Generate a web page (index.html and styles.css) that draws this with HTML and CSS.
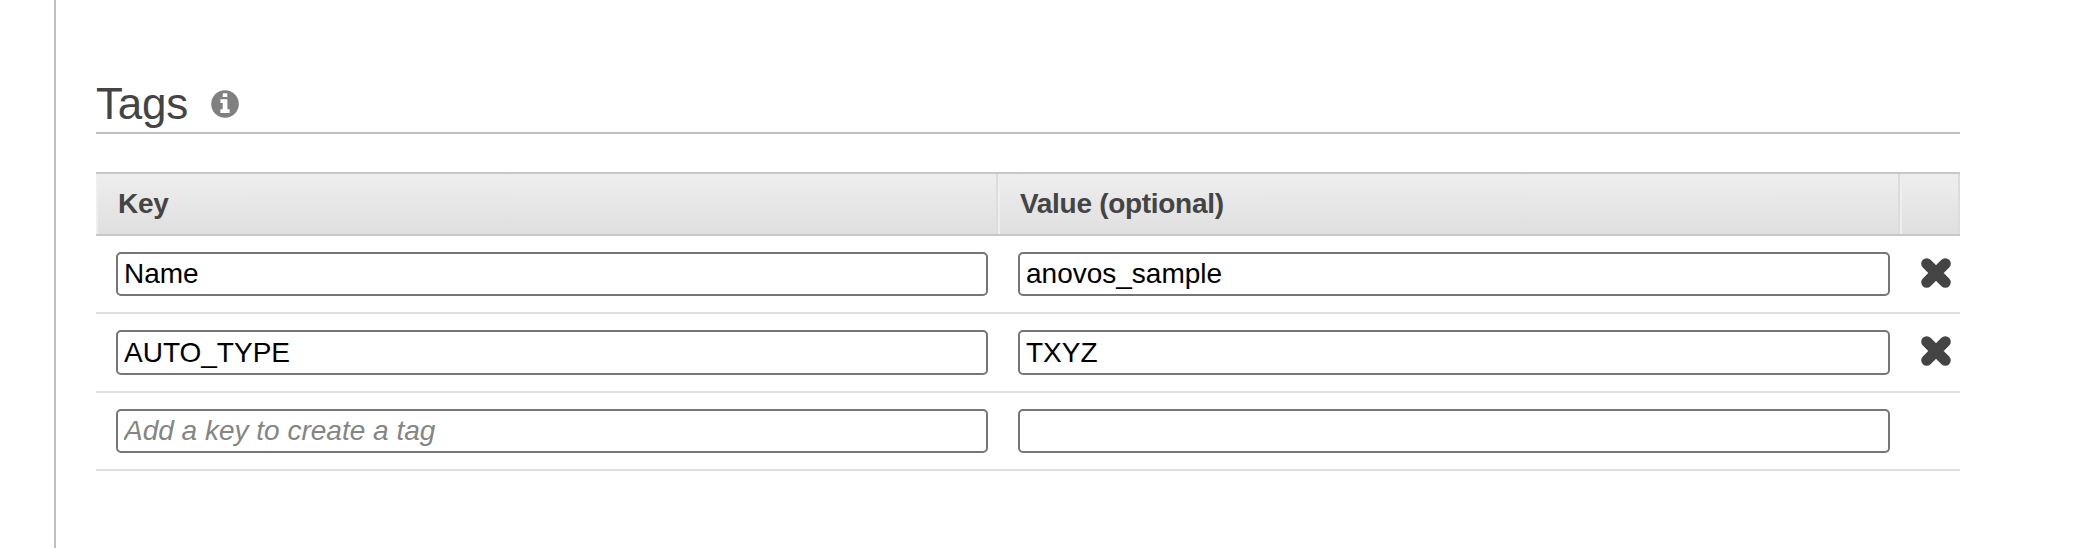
FILE: index.html
```html
<!DOCTYPE html>
<html lang="en">
<head>
<meta charset="utf-8">
<title>Tags</title>
<link rel="stylesheet" href="styles.css">
</head>
<body>
<main class="panel">
  <header class="section-head">
    <h2 class="title">Tags</h2>
    <svg class="info" viewBox="0 0 28 28" aria-label="Info"><circle cx="14" cy="14" r="13.8" fill="#808080"/><path fill="#fff" d="M11.7 3.2h4.6v3.9h-4.6zM9.4 9.3h7v10h2.2v3.7H9.4v-3.7h2.3v-6.2H9.4z"/></svg>
  </header>
  <div class="tag-table">
    <div class="row head">
      <div class="th"><span class="key-label">Key</span></div>
      <div class="th"><span class="value-label">Value (optional)</span></div>
      <div class="th"></div>
    </div>
    <div class="row">
      <div class="cell"><input class="field name" value="Name"></div>
      <div class="cell"><input class="field sample" value="anovos_sample"></div>
      <button class="remove" aria-label="Remove tag"><svg class="cross" viewBox="0 0 32 32"><path d="M6.7 6.7l18.6 18.6M25.3 6.7L6.7 25.3"/></svg></button>
    </div>
    <div class="row tall">
      <div class="cell"><input class="field auto" value="AUTO_TYPE"></div>
      <div class="cell"><input class="field xyz" value="TXYZ"></div>
      <button class="remove" aria-label="Remove tag"><svg class="cross" viewBox="0 0 32 32"><path d="M6.7 6.7l18.6 18.6M25.3 6.7L6.7 25.3"/></svg></button>
    </div>
    <div class="row">
      <div class="cell"><input class="field" placeholder="Add a key to create a tag"></div>
      <div class="cell"><input class="field"></div>
    </div>
  </div>
</main>
</body>
</html>
```
FILE: styles.css
```css
* { box-sizing: border-box; }
body {
  margin: 0;
  background: #fff;
  font-family: "Liberation Sans", Arial, sans-serif;
  color: #444;
}
.panel {
  height: 548px;
  margin-left: 54px;
  padding: 78px 116px 0 40px;
  border-left: 2px solid #bfbfbf;
  overflow: hidden;
}
.section-head {
  display: flex;
  align-items: flex-start;
  height: 56px;
  border-bottom: 2px solid #bfbfbf;
}
.title {
  width: 115px;
  margin: 0;
  font-size: 44px;
  font-weight: 400;
  line-height: 52px;
  letter-spacing: -0.2px;
}
.info { width: 28px; height: 28px; margin-top: 12px; }
.tag-table { margin-top: 38px; }
.row {
  display: grid;
  grid-template-columns: 902px 902px 60px;
  height: 78px;
  border-bottom: 2px solid #e0e0e0;
}
.row.tall { height: 79px; }
.row.head {
  height: 64px;
  border-top: 2px solid #c8c8c8;
  border-bottom-color: #c8c8c8;
  background: linear-gradient(#eee, #dfdfdf);
}
.th {
  padding-left: 20px;
  border-left: 2px solid #eee;
  border-right: 2px solid #dcdcdc;
  font-size: 28px;
  font-weight: 700;
  line-height: 60px;
}
.key-label { letter-spacing: -0.3px; }
.value-label { letter-spacing: -0.3px; }
.cell { padding: 16px 10px 0 20px; }
.field {
  display: block;
  width: 872px;
  height: 44px;
  padding: 0 6px;
  border: 2px solid #767676;
  border-radius: 5px;
  outline: 0;
  background: #fff;
  color: #000;
  font: 28px "Liberation Sans", Arial, sans-serif;
}
.tall .field { height: 45px; }
.field::placeholder { color: #858585; font-style: italic; opacity: 1; }
.remove {
  width: 32px;
  height: 32px;
  margin: 21px 0 0 20px;
  padding: 0;
  border: 0;
  background: none;
}
.cross {
  display: block;
  width: 32px;
  height: 32px;
  fill: none;
  stroke: #444;
  stroke-width: 11;
  stroke-linecap: round;
}
```
